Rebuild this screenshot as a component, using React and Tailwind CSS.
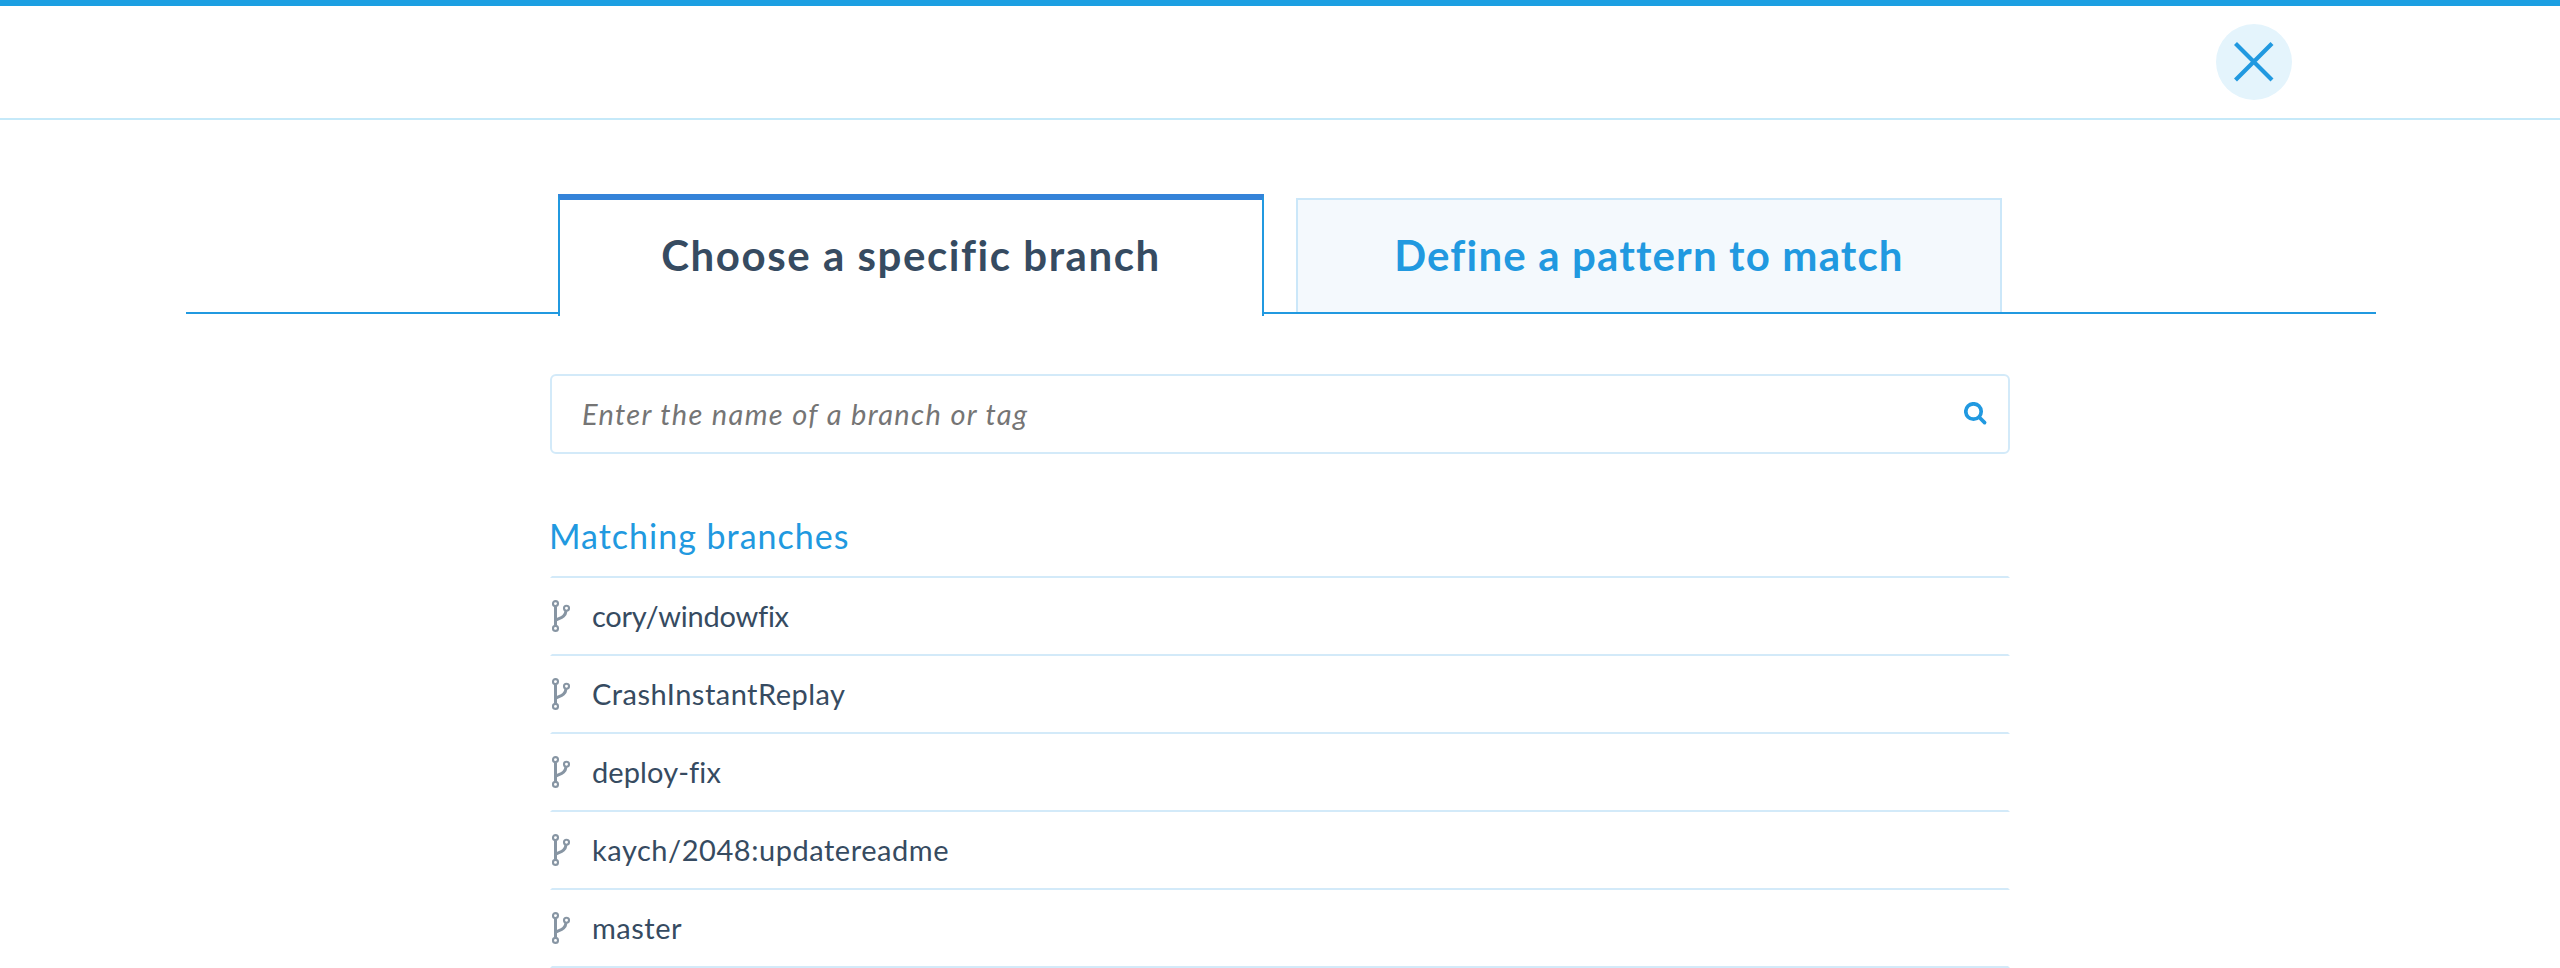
import React from "react";

const branches = [
  { name: "cory/windowfix", tracking: "tracking-[-0.25px]" },
  { name: "CrashInstantReplay", tracking: "tracking-[0.47px]" },
  { name: "deploy-fix", tracking: "tracking-[0.1px]" },
  { name: "kaych/2048:updatereadme", tracking: "tracking-[0.54px]" },
  { name: "master", tracking: "tracking-[0.5px]" },
];

function CloseIcon() {
  return (
    <svg width="40" height="40" viewBox="0 0 40 40" stroke="#2199e0" strokeWidth="4.2" fill="none">
      <path d="M1.5 1.5L38 38M38 1.5L1.5 38" />
    </svg>
  );
}

function SearchIcon() {
  return (
    <svg width="24" height="24" viewBox="0 0 24 24" stroke="#2199e0" strokeWidth="3.7" fill="none" strokeLinecap="round">
      <circle cx="9.5" cy="9.5" r="7.7" />
      <path d="M15.5 15.5L20.6 20.6" />
    </svg>
  );
}

function BranchIcon() {
  return (
    <svg width="18" height="32" viewBox="0 0 18 32" stroke="#8795a3" fill="none">
      <g strokeWidth="2.1">
        <circle cx="3.5" cy="3.6" r="2.5" />
        <circle cx="3.5" cy="28.4" r="2.5" />
        <circle cx="14.5" cy="8.3" r="2.5" />
      </g>
      <path strokeWidth="3" d="M3.5 6.4V25.6M3.6 20.2C9 17.6 13.3 17 14 11" />
    </svg>
  );
}

export default function App() {
  return (
    <div className="h-[968px] overflow-hidden bg-white font-['Lato','Open_Sans',sans-serif] text-[#364b61]">
      <header className="flex h-[120px] items-center justify-end border-t-6 border-b-2 border-t-[#1c9fe2] border-b-[#c5e9f9] pr-[268px]">
        <button aria-label="Close" className="flex size-[76px] items-center justify-center rounded-full bg-[#e4f4fc]">
          <CloseIcon />
        </button>
      </header>

      <nav className="mt-[74px] ml-[186px] flex h-[120px] w-[2190px] items-start border-b-2 border-[#2199e0] pl-[372px] text-[42px] leading-[50px] font-bold">
        <button className="flex h-[122px] w-[706px] justify-center border-x-2 border-t-6 border-x-[#2199e0] border-t-[#3483d9] bg-white pt-[30px]">
          <span className="whitespace-nowrap tracking-[1.55px]">Choose a specific branch</span>
        </button>
        <button className="mt-1 ml-8 flex h-[114px] w-[706px] justify-center border-x-2 border-t-2 border-[#cbe7f9] bg-[#f4f9fd] pt-[30px] text-[#2199e0]">
          <span className="whitespace-nowrap tracking-[1.15px]">Define a pattern to match</span>
        </button>
      </nav>

      <main className="mx-auto mt-[60px] w-[1460px]">
        <label className="flex h-20 items-center rounded-md border-2 border-[#d3eaf9] pr-5 pl-[30px]">
          <input
            type="text"
            placeholder="Enter the name of a branch or tag"
            className="h-full min-w-0 flex-1 pb-[2px] text-[29px] tracking-[1.34px] italic outline-none placeholder:text-[#757575] placeholder:opacity-100"
          />
          <SearchIcon />
        </label>

        <h2 className="mt-[60px] h-16 border-x-2 border-b-2 border-x-transparent border-b-[#d3eaf9] text-[34px] leading-[44px] tracking-[1px] text-[#2199e0]">
          <span className="-ml-[3px]">Matching branches</span>
        </h2>
        <ul>
          {branches.map(({ name, tracking }) => (
            <li key={name} className="flex h-[78px] items-center gap-[22px] border-x-2 border-b-2 border-x-transparent border-b-[#d3eaf9] text-[29px]">
              <BranchIcon />
              <span className={tracking}>{name}</span>
            </li>
          ))}
        </ul>
      </main>
    </div>
  );
}
